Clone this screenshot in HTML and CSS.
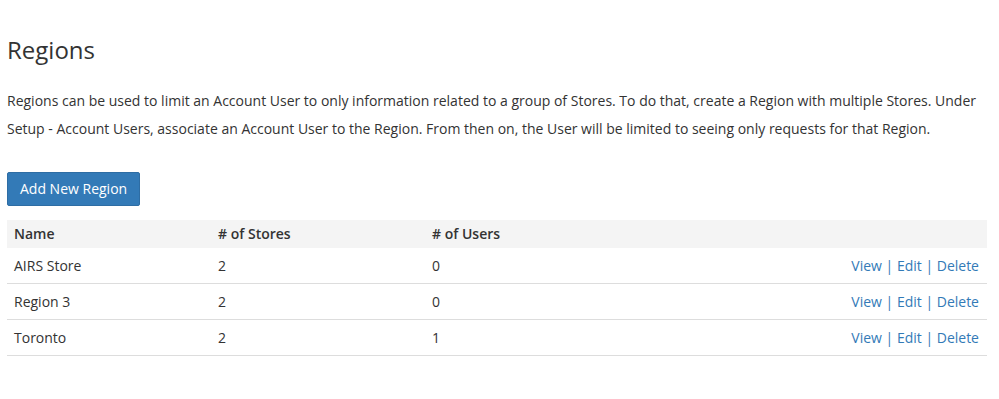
FILE: index.html
```html
<!DOCTYPE html>
<html lang="en">
<head>
  <meta charset="UTF-8" />
  <title>Regions</title>
  <link rel="stylesheet" href="styles.css">
</head>
<body>
  <div class="page">
    <h1 class="title">Regions</h1>
    <p class="intro">Regions can be used to limit an Account User to only information related to a group of Stores. To do that, create a Region with multiple Stores. Under Setup - Account Users, associate an Account User to the Region. From then on, the User will be limited to seeing only requests for that Region.</p>

    <button type="button" class="btn-primary">Add New Region</button>

    <table class="regions">
      <thead>
        <tr>
          <th class="col-name">Name</th>
          <th class="col-stores"># of Stores</th>
          <th class="col-users"># of Users</th>
          <th></th>
        </tr>
      </thead>
      <tbody>
        <tr>
          <td>AIRS Store</td>
          <td>2</td>
          <td>0</td>
          <td class="actions"><a href="#">View</a> | <a href="#">Edit</a> | <a href="#">Delete</a></td>
        </tr>
        <tr>
          <td>Region 3</td>
          <td>2</td>
          <td>0</td>
          <td class="actions"><a href="#">View</a> | <a href="#">Edit</a> | <a href="#">Delete</a></td>
        </tr>
        <tr>
          <td>Toronto</td>
          <td>2</td>
          <td>1</td>
          <td class="actions"><a href="#">View</a> | <a href="#">Edit</a> | <a href="#">Delete</a></td>
        </tr>
      </tbody>
    </table>
  </div>
</body>
</html>
```

FILE: styles.css
```css
body {
  margin: 0;
  font-family: 'Open Sans', sans-serif;
  font-size: 14px;
  color: #333;
  background: #fff;
}

.page {
  padding: 0 12px 0 7px;
}

.title {
  margin: 0;
  padding-top: 34px;
  font-size: 24px;
  font-weight: 400;
  line-height: 32px;
}

.intro {
  margin: 21px 0 0;
  line-height: 28px;
}

.btn-primary {
  margin-top: 29px;
  padding: 6px 12px;
  font-family: inherit;
  font-size: 14px;
  line-height: 20px;
  color: #fff;
  background: #337ab7;
  border: 1px solid #2e6da4;
  border-radius: 2px;
  cursor: pointer;
}

.regions {
  margin-top: 14px;
  width: 100%;
  border-collapse: collapse;
}

.regions th {
  text-align: left;
  font-weight: 600;
  background: #f4f4f4;
  padding: 4px 7px;
  line-height: 20px;
}

.col-name { width: 190px; }
.col-stores { width: 200px; }
.col-users { width: 200px; }

.regions td {
  padding: 8px 8px 7px 7px;
  line-height: 20px;
  border-bottom: 1px solid #ddd;
}

.regions td.actions {
  text-align: right;
  color: #337ab7;
}

.actions a {
  color: #337ab7;
  text-decoration: none;
}
```
